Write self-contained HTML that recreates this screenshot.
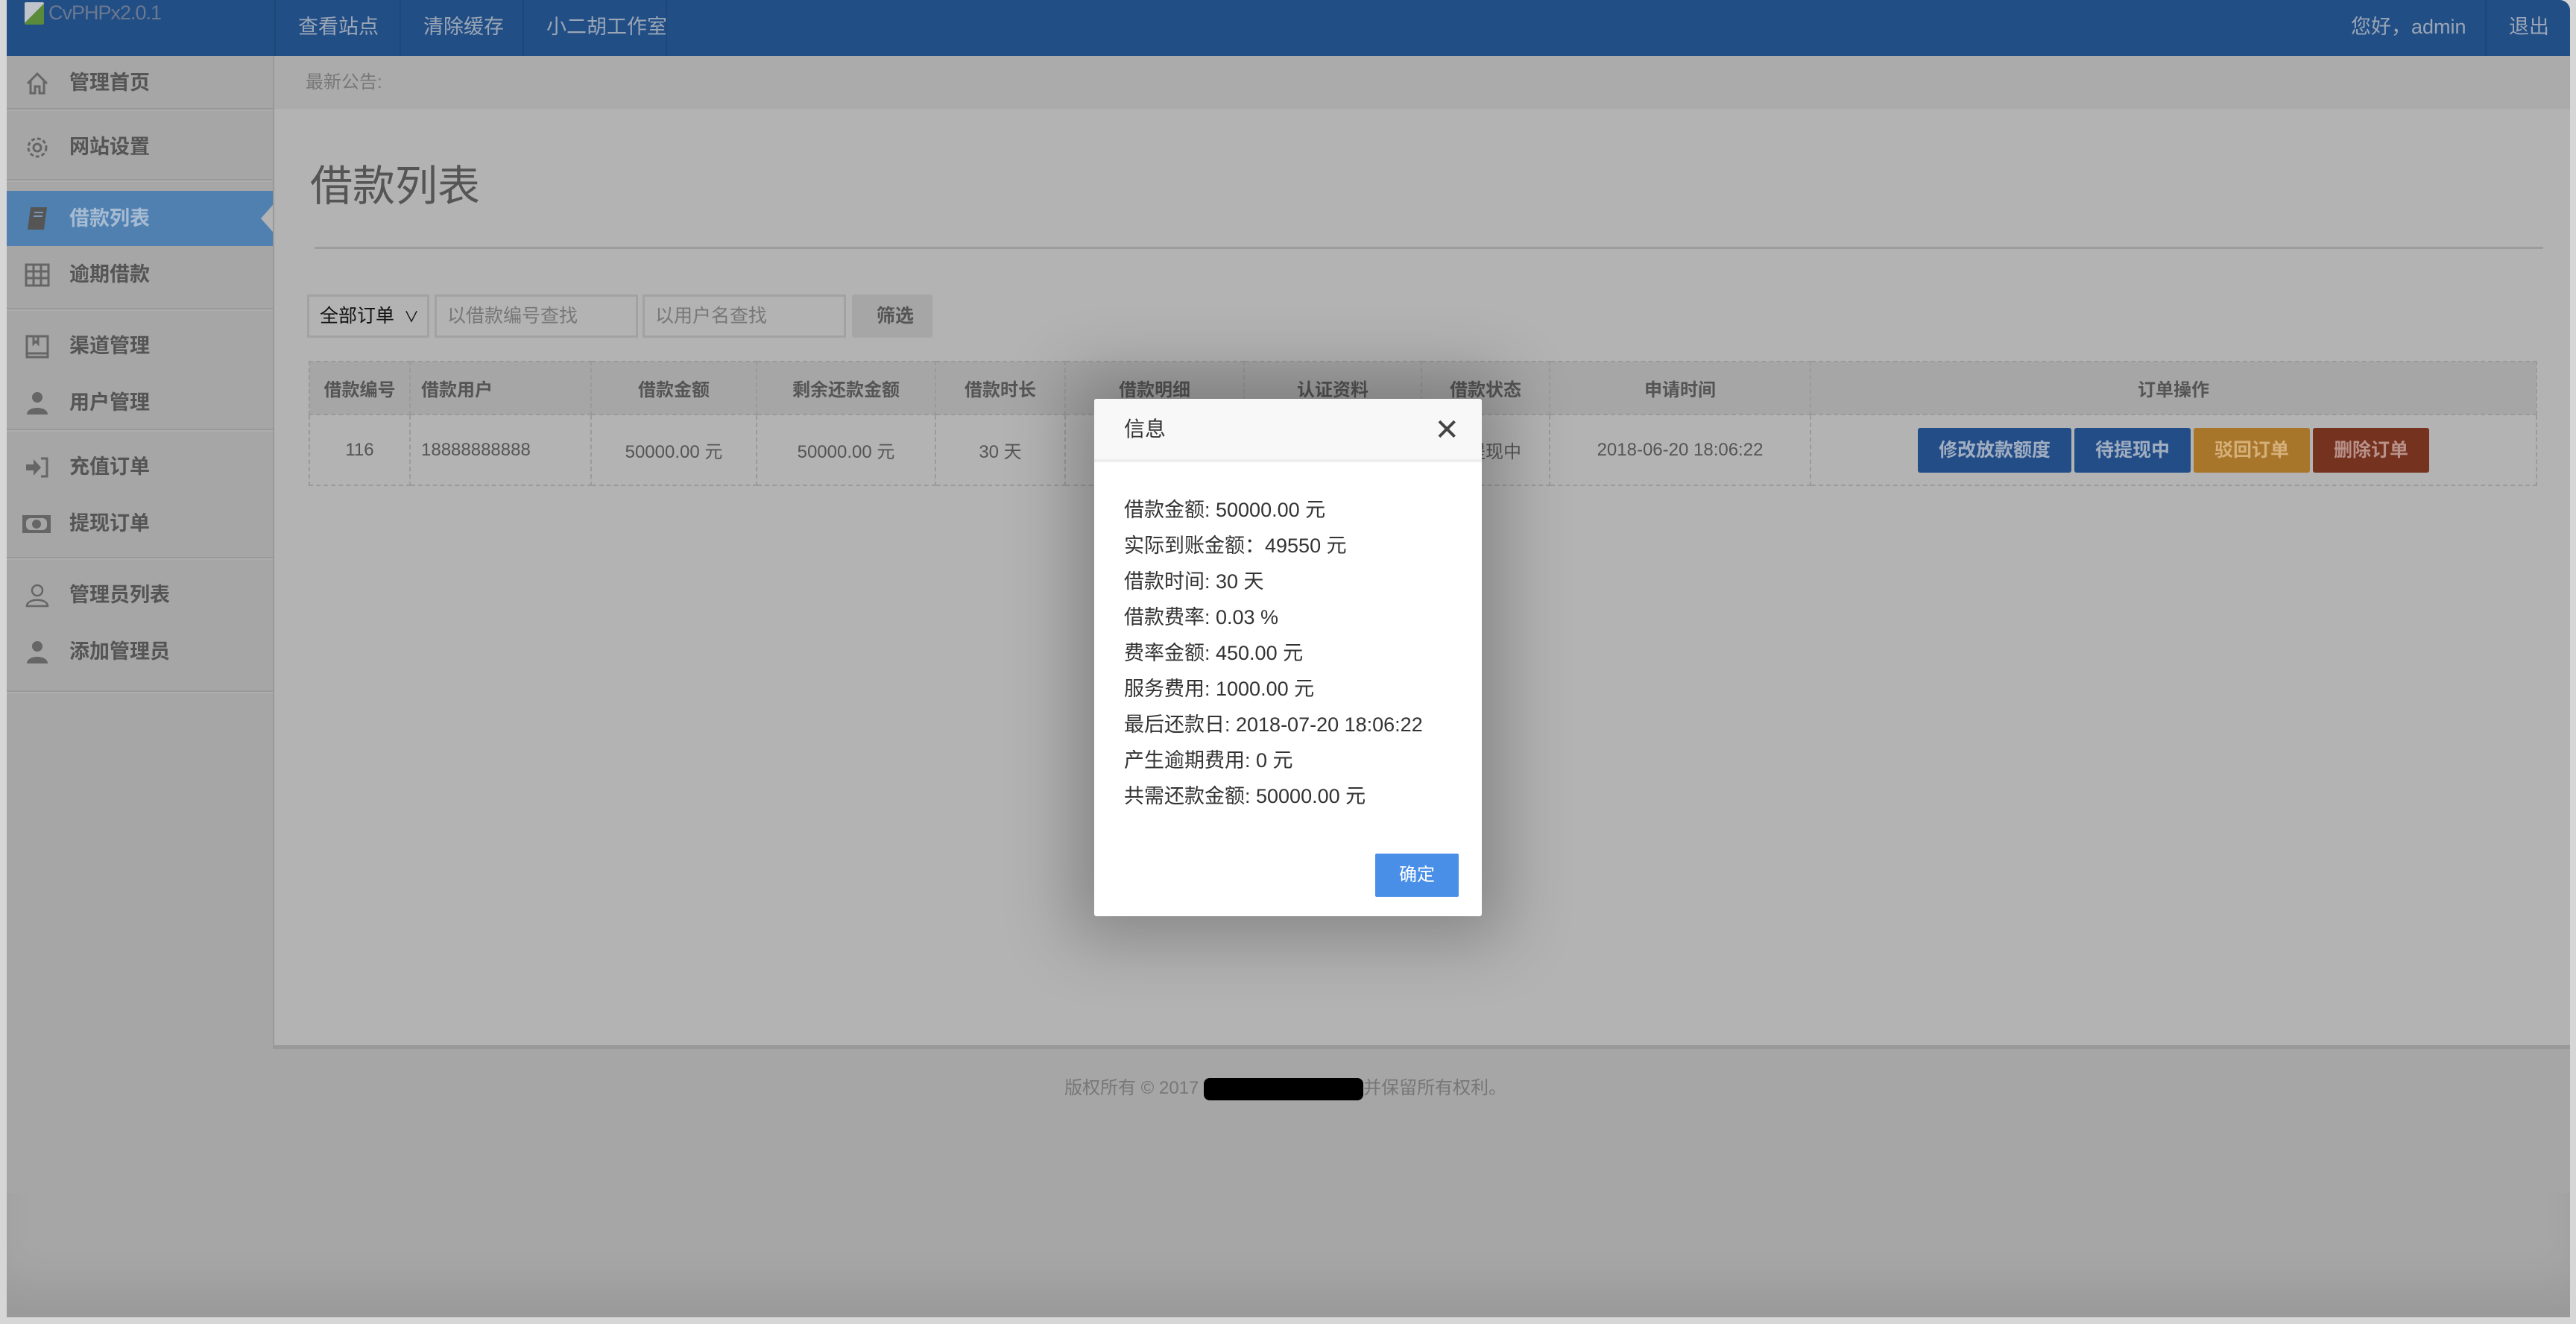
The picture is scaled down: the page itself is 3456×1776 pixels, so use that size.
<!DOCTYPE html>
<html><head><meta charset="utf-8">
<style>
*{margin:0;padding:0;box-sizing:border-box}
html,body{width:3456px;height:1776px;overflow:hidden;background:#d6d6d6;font-family:"Liberation Sans","Noto Sans CJK SC",sans-serif}
.abs{position:absolute}
#win{position:absolute;left:9px;top:0;width:3439px;height:1767px;background:#a6a6a6;overflow:hidden;border-top-right-radius:14px}
#hdr{position:absolute;left:0;top:0;width:3439px;height:75px;background:#224e86}
.nav{position:absolute;top:0;height:75px;line-height:72px;color:#9aa6b6;font-size:27px;border-left:2px solid #1e4677;padding-left:30px;white-space:nowrap}
#side{position:absolute;left:0;top:75px;width:359px;height:1332px;background:#a6a6a6;border-right:2px solid #999}
.sep{position:absolute;left:0;width:357px;height:4px;background:#999;border-bottom:2px solid #adadad}
.item{position:absolute;left:0;width:357px;height:72px;font-size:27px;font-weight:bold;color:#555;line-height:72px;padding-left:84px}
.ico{position:absolute;left:24px;top:20px;width:34px;height:34px}
#main{position:absolute;left:359px;top:75px;width:3080px;height:1332px;background:#b3b3b3;border-bottom:5px solid #999}
#notice{position:absolute;left:0;top:0;width:100%;height:71px;background:#ababab;color:#787878;font-size:24px;line-height:71px;padding-left:42px}
.in{position:absolute;top:320px;height:58px;border:3px solid #a2a2a2;background:#b3b3b3;font-size:25px;color:#777;line-height:52px;padding-left:14px}
table{position:absolute;left:46px;top:409px;width:2990px;border-collapse:collapse;font-size:24px;color:#555}
td,th{border:2px dashed #9a9a9a;text-align:center;height:71px}
th{background:#a6a6a6;font-weight:bold}
td{height:95px}
.btn{display:inline-block;height:60px;line-height:60px;padding:0 28px;font-size:25px;font-weight:bold;border-radius:3px;margin:0 2px}
#modal{position:absolute;left:1468px;top:535px;width:520px;height:694px;background:#fff;border-radius:3px;box-shadow:0 0 90px 30px rgba(0,0,0,0.25)}
#mh{height:85px;background:#f8f8f8;border-bottom:4px solid #eee;font-size:28px;color:#333;line-height:82px;padding-left:40px;border-radius:3px 3px 0 0}
.ml{position:absolute;left:40px;font-size:27px;color:#333;line-height:48px}
</style></head><body>
<div id="win">
 <div id="hdr">
  <div class="abs" style="left:24px;top:3px;width:26px;height:30px;background:linear-gradient(135deg,#bfc4cb 50%,#5a8a3a 50%);border-radius:2px"></div>
  <div class="abs" style="left:56px;top:2px;font-size:27px;color:#6a7890;letter-spacing:-1px">CvPHPx2.0.1</div>
  <div class="nav" style="left:359px;width:168px">查看站点</div>
  <div class="nav" style="left:527px;width:165px">清除缓存</div>
  <div class="nav" style="left:692px;width:192px">小二胡工作室</div>
  <div class="nav" style="left:884px;width:1px;padding:0"></div>
  <div class="abs" style="left:3145px;top:0;line-height:72px;font-size:27px;color:#9aa6b6">您好，admin</div>
  <div class="nav" style="left:3325px;width:114px">退出</div>
 </div>
 <div id="side">
  <div class="item" style="top:0">管理首页<svg class="ico" viewBox="0 0 34 34" fill="none" stroke="#666" stroke-width="3"><path d="M4 17 L17 4 L30 17 M8 14 V30 H14 V21 H20 V30 H26 V14"/></svg></div>
  <div class="sep" style="top:70px"></div>
  <div class="item" style="top:86px">网站设置<svg class="ico" viewBox="0 0 34 34" fill="none" stroke="#666" stroke-width="3"><circle cx="17" cy="17" r="5"/><circle cx="17" cy="17" r="12" stroke-dasharray="5 3"/></svg></div>
  <div class="sep" style="top:165px"></div>
  <div class="item" style="top:181px;height:74px;background:#5080b0;color:#a6bbd2;line-height:74px">借款列表<svg class="ico" viewBox="0 0 34 34"><path d="M8 2 H30 L26 32 H4 Z" fill="#555"/><path d="M13 9 H25 M12 14 H24" stroke="#7b97b8" stroke-width="2"/></svg>
   <div class="abs" style="right:0;top:19px;width:0;height:0;border-top:18px solid transparent;border-bottom:18px solid transparent;border-right:16px solid #b3b3b3"></div></div>
  <div class="item" style="top:257px">逾期借款<svg class="ico" viewBox="0 0 34 34" fill="none" stroke="#666" stroke-width="3"><rect x="2" y="3" width="30" height="28"/><path d="M2 12 H32 M2 21 H32 M12 3 V31 M22 3 V31"/></svg></div>
  <div class="sep" style="top:338px"></div>
  <div class="item" style="top:353px">渠道管理<svg class="ico" viewBox="0 0 34 34" fill="none" stroke="#666" stroke-width="3"><rect x="3" y="3" width="28" height="28"/><path d="M3 26 H31 M12 3 V13 L15 10 L18 13 V3"/></svg></div>
  <div class="item" style="top:429px">用户管理<svg class="ico" viewBox="0 0 34 34" fill="#666"><circle cx="17" cy="9" r="7"/><path d="M3 32 C3 20 31 20 31 32 Z"/></svg></div>
  <div class="sep" style="top:500px"></div>
  <div class="item" style="top:515px">充值订单<svg class="ico" viewBox="0 0 34 34"><path d="M2 13 H12 V6 L22 17 L12 28 V21 H2 Z" fill="#666"/><path d="M22 5 H30 V29 H22" fill="none" stroke="#666" stroke-width="3"/></svg></div>
  <div class="item" style="top:591px">提现订单<svg class="ico" viewBox="0 0 40 34" style="left:20px;width:40px"><rect x="1" y="5" width="38" height="24" fill="#666"/><rect x="6" y="9" width="28" height="16" rx="6" fill="#a6a6a6"/><circle cx="20" cy="17" r="6" fill="#666"/></svg></div>
  <div class="sep" style="top:672px"></div>
  <div class="item" style="top:687px">管理员列表<svg class="ico" viewBox="0 0 34 34" fill="none" stroke="#666" stroke-width="2.5"><circle cx="17" cy="10" r="7"/><path d="M3 31 C3 20 31 20 31 31 Z"/></svg></div>
  <div class="item" style="top:763px">添加管理员<svg class="ico" viewBox="0 0 34 34" fill="#666"><circle cx="17" cy="9" r="7"/><path d="M3 32 C3 20 31 20 31 32 Z"/></svg></div>
  <div class="sep" style="top:851px"></div>
 </div>
 <div id="main">
  <div id="notice">最新公告:</div>
  <div class="abs" style="left:48px;top:129px;font-size:57px;color:#555">借款列表</div>
  <div class="abs" style="left:54px;top:256px;width:2990px;height:3px;background:#9c9c9c"></div>
  <div class="in" style="left:44px;width:164px;color:#111">全部订单 <span style="font-size:20px;margin-left:6px">∨</span></div>
  <div class="in" style="left:215px;width:273px">以借款编号查找</div>
  <div class="in" style="left:494px;width:273px">以用户名查找</div>
  <div class="in" style="left:775px;width:108px;background:#a6a6a6;border-color:#a6a6a6;font-weight:bold;color:#555;padding-left:30px;border-radius:3px">筛选</div>
  <table>
   <tr><th style="width:135px">借款编号</th><th style="width:243px;text-align:left;padding-left:14px">借款用户</th><th style="width:222px">借款金额</th><th style="width:240px">剩余还款金额</th><th style="width:174px">借款时长</th><th style="width:240px">借款明细</th><th style="width:238px">认证资料</th><th style="width:172px">借款状态</th><th style="width:350px">申请时间</th><th>订单操作</th></tr>
   <tr><td>116</td><td style="text-align:left;padding-left:14px">18888888888</td><td>50000.00 元</td><td>50000.00 元</td><td>30 天</td><td></td><td></td><td>待提现中</td><td>2018-06-20 18:06:22</td>
   <td><span class="btn" style="background:#224d86;color:#a1adc0">修改放款额度</span><span class="btn" style="background:#224d86;color:#a1adc0">待提现中</span><span class="btn" style="background:#a8762b;color:#d6b07a">驳回订单</span><span class="btn" style="background:#74321f;color:#b8918a">删除订单</span></td></tr>
  </table>
 </div>
 <div class="abs" style="left:1419px;top:1439px;font-size:24px;color:#777">版权所有 © 2017 <span style="display:inline-block;width:214px;height:30px;background:#000;border-radius:8px;vertical-align:middle"></span>并保留所有权利。</div>
 <div class="abs" style="left:0;top:1600px;width:3439px;height:167px;box-shadow:inset 0 -60px 60px -20px rgba(0,0,0,0.08)"></div>
</div>
<div id="modal">
 <div id="mh">信息<span class="abs" style="right:30px;top:18px;font-size:40px;color:#444;line-height:48px">✕</span></div>
 <div class="ml" style="top:125px">借款金额: 50000.00 元</div>
 <div class="ml" style="top:173px">实际到账金额：49550 元</div>
 <div class="ml" style="top:221px">借款时间: 30 天</div>
 <div class="ml" style="top:269px">借款费率: 0.03 %</div>
 <div class="ml" style="top:317px">费率金额: 450.00 元</div>
 <div class="ml" style="top:365px">服务费用: 1000.00 元</div>
 <div class="ml" style="top:413px">最后还款日: 2018-07-20 18:06:22</div>
 <div class="ml" style="top:461px">产生逾期费用: 0 元</div>
 <div class="ml" style="top:509px">共需还款金额: 50000.00 元</div>
 <div class="abs" style="left:377px;top:610px;width:112px;height:58px;background:#4a8fe7;color:#fff;font-size:24px;line-height:58px;text-align:center;border-radius:2px">确定</div>
</div>
</body></html>
